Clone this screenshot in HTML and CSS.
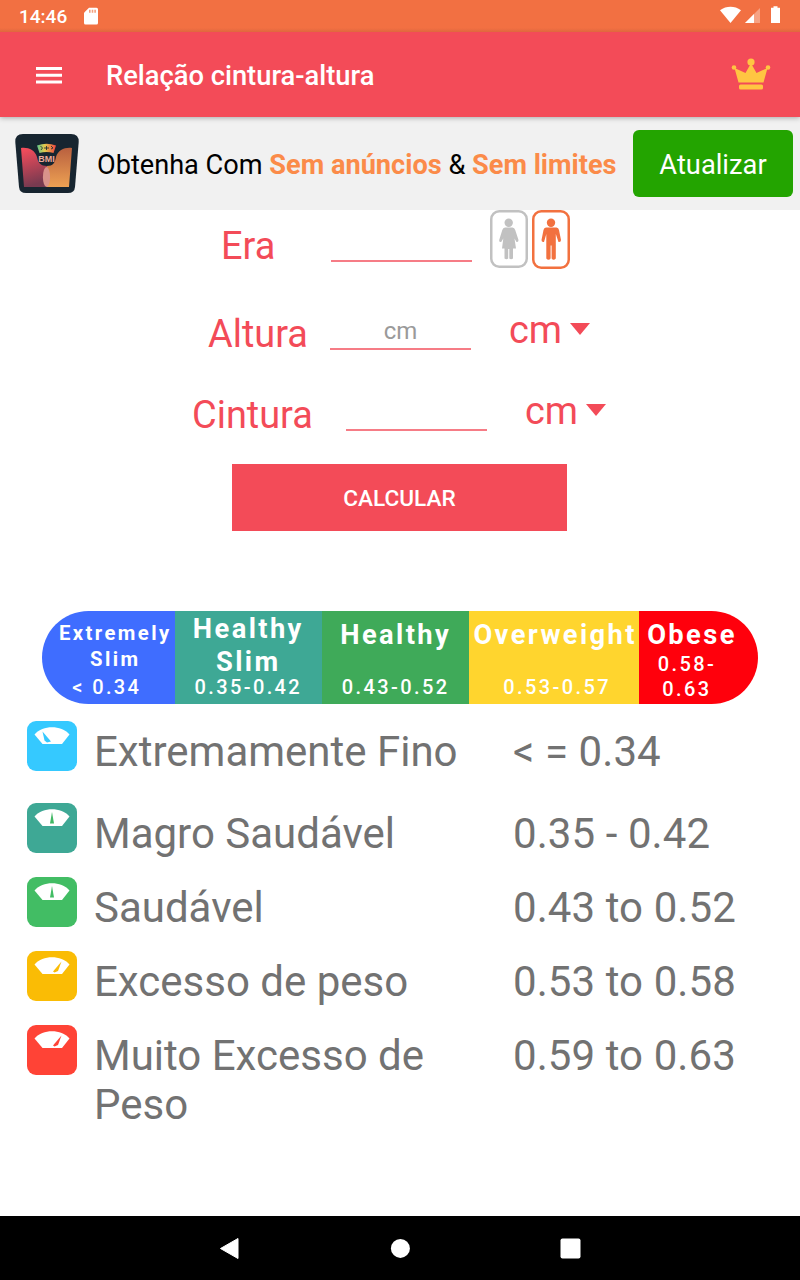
FILE: index.html
```html
<!DOCTYPE html>
<html lang="pt">
<head>
  <meta charset="UTF-8" />
  <meta name="viewport" content="width=device-width, initial-scale=1.0" />
  <title>Relação cintura-altura</title>
  <link rel="stylesheet" href="styles.css">
</head>
<body>

  <svg class="symbols" aria-hidden="true">
    <symbol id="scale-face" viewBox="0 0 50 50">
      <path d="M7.500 13.500C16 3.800 34 3.800 42.500 13.500L35 23H15.500Z" fill="#fff"/>
    </symbol>
  </svg>

  <div class="status-bar">
    <span class="time">14:46</span>
    <svg class="sd-card" width="16" height="18" viewBox="0 0 16 18">
      <path d="M6 .8H13.500Q15 .8 15 2.300V16Q15 17.500 13.500 17.500H2.500Q1 17.500 1 16V5.800Z" fill="#fff"/>
      <path d="M6 2.800h1.600v3H6zM8.700 2.800h1.600v3H8.700zM11.300 2.800h1.600v3h-1.600z" fill="#f4a07f"/>
    </svg>
    <svg class="signals" width="62" height="18" viewBox="0 0 62 18">
      <path d="M1 3.200C7.500 -1.300 15.500 -1.300 22 3.200L11.500 16Z" fill="#fff"/>
      <path d="M26 16L41 1V16Z" fill="#fff" opacity=".35"/>
      <path d="M26 16L35 7V16Z" fill="#fff"/>
      <path d="M52 .700h2.500V-.700h4v1.400H61V16h-9z" fill="#fff"/>
    </svg>
  </div>

  <header class="toolbar">
    <svg class="menu" width="26" height="17" viewBox="0 0 26 17">
      <path d="M0 0h26v3H0zM0 6.800h26v3H0zM0 13.500h26v3H0z" fill="#fff"/>
    </svg>
    <h1>Relação cintura-altura</h1>
    <svg class="crown" width="40" height="32" viewBox="0 0 40 32">
      <path d="M3.500 10L14.500 15L19 7H21L25.500 15L36.500 10L32.500 24.500H7.500Z" fill="#ffc542"/>
      <circle cx="20" cy="4" r="3.600" fill="#ffc542"/>
      <circle cx="3" cy="9.500" r="2.300" fill="#ffc542"/>
      <circle cx="37" cy="9.500" r="2.300" fill="#ffc542"/>
      <rect x="8" y="26.500" width="24" height="5" rx="1.500" fill="#ffc542"/>
    </svg>
  </header>

  <div class="banner">
    <svg class="logo" width="64" height="60" viewBox="0 0 64 60">
      <defs>
        <linearGradient id="logo-left" x1="0" y1="0" x2=".2" y2="1">
          <stop offset="0" stop-color="#fb4d5c"/>
          <stop offset="1" stop-color="#783a50"/>
        </linearGradient>
        <linearGradient id="logo-right" x1="0" y1="0" x2="0" y2="1">
          <stop offset="0" stop-color="#b9603f"/>
          <stop offset="1" stop-color="#eda153"/>
        </linearGradient>
        <linearGradient id="logo-dial">
          <stop offset="0" stop-color="#5cc58c"/>
          <stop offset=".4" stop-color="#e3c94c"/>
          <stop offset="1" stop-color="#ee4340"/>
        </linearGradient>
      </defs>
      <path d="M8 0H56Q64 0 63.700 8L60 53Q59.500 59 53 59H11Q4.500 59 4 53L.3 8Q0 0 8 0Z" fill="#172530"/>
      <path d="M6 14C13 13 20 16 22 23C23 29 26 32 32 32V53H9Z" fill="url(#logo-left)"/>
      <path d="M57 14C50 13 43 16 41 23C40 29 38 32 32 32V53H54Z" fill="url(#logo-right)"/>
      <ellipse cx="31.500" cy="43" rx="3.600" ry="10" fill="#d9938b"/>
      <path d="M22 11.500Q31.500 8 41 11.500L38.500 19Q31.500 17 24.500 19Z" fill="url(#logo-dial)"/>
      <path d="M25.500 12L27.500 14L26 16M29 14H34M31.500 12V16M36 12L38 14L36 15" fill="none" stroke="#172530" stroke-width=".8"/>
      <text x="31.500" y="28" text-anchor="middle">BMI</text>
    </svg>
    <p class="offer">Obtenha Com <b>Sem anúncios</b> &amp; <b>Sem limites</b></p>
    <button class="upgrade">Atualizar</button>
  </div>

  <main>
    <form class="form">
      <div class="field field-age">
        <label>Era</label>
        <span class="entry"></span>
        <div class="gender">
          <svg class="woman" width="38" height="58" viewBox="0 0 38 58">
            <rect x="1.250" y="1.250" width="35.500" height="55.500" rx="8" fill="none" stroke="#c1c1c1" stroke-width="2.500"/>
            <circle cx="18.700" cy="12.800" r="4.200" fill="#c1c1c1"/>
            <path d="M15 17.500H22.500Q24.500 17.500 25.200 20L28.500 30Q28.500 32.500 26.500 32L24.500 28.500L26 38.500H23V48.500Q21 50 19.300 48.500V39H18.200V48.500Q16.500 50 14.500 48.500V38.500H12L13.300 28.500L11.200 32Q9 32.500 9.200 30L12.300 20Q13 17.500 15 17.500Z" fill="#c1c1c1"/>
          </svg>
          <svg class="man" width="38" height="59" viewBox="0 0 38 59">
            <rect x="1.250" y="1.250" width="35.500" height="56.500" rx="8" fill="none" stroke="#f2713f" stroke-width="2.500"/>
            <circle cx="19" cy="12.800" r="4.200" fill="#f2713f"/>
            <path d="M14 17.500H24.500Q26.500 17.500 27 20L29 30Q29 32.500 26.500 32L23.800 24V48.500Q21.500 51 19.600 48.500V35.500H18.600V48.500Q16.500 51 14.300 48.500V24L12 32Q9.500 32.500 9.500 30L11.500 20Q12 17.500 14 17.500Z" fill="#f2713f"/>
          </svg>
        </div>
      </div>

      <div class="field field-height">
        <label>Altura</label>
        <span class="entry">cm</span>
        <div class="unit">cm <i class="caret"></i></div>
      </div>

      <div class="field field-waist">
        <label>Cintura</label>
        <span class="entry"></span>
        <div class="unit">cm <i class="caret"></i></div>
      </div>

      <button type="button" class="calculate">CALCULAR</button>
    </form>

    <div class="gauge">
      <div class="zone zone-extreme"><strong>Extremely<br>Slim</strong><span>&lt; 0.34</span></div>
      <div class="zone zone-slim"><strong>Healthy<br>Slim</strong><span>0.35-0.42</span></div>
      <div class="zone zone-healthy"><strong>Healthy</strong><span>0.43-0.52</span></div>
      <div class="zone zone-over"><strong>Overweight</strong><span>0.53-0.57</span></div>
      <div class="zone zone-obese"><strong>Obese</strong><span>0.58-<br>0.63</span></div>
    </div>

    <ul class="legend">
      <li>
        <svg class="scale blue" viewBox="0 0 50 50"><use href="#scale-face"/><path d="M15.500 10.500L24 20.500L20 21.500L17.500 19.500Z"/></svg>
        <span class="name">Extremamente Fino</span>
        <span class="range">&lt; = 0.34</span>
      </li>
      <li>
        <svg class="scale teal" viewBox="0 0 50 50"><use href="#scale-face"/><path d="M25 9L27 20.500H23Z"/></svg>
        <span class="name">Magro Saudável</span>
        <span class="range">0.35 - 0.42</span>
      </li>
      <li>
        <svg class="scale green" viewBox="0 0 50 50"><use href="#scale-face"/><path d="M25 9L27 20.500H23Z"/></svg>
        <span class="name">Saudável</span>
        <span class="range">0.43 to 0.52</span>
      </li>
      <li>
        <svg class="scale yellow" viewBox="0 0 50 50"><use href="#scale-face"/><path d="M34.500 10.500L31 20L27.500 21.500L26 20.500Z"/></svg>
        <span class="name">Excesso de peso</span>
        <span class="range">0.53 to 0.58</span>
      </li>
      <li>
        <svg class="scale red" viewBox="0 0 50 50"><use href="#scale-face"/><path d="M34.500 10.500L31 20L27.500 21.500L26 20.500Z"/></svg>
        <span class="name">Muito Excesso de Peso</span>
        <span class="range">0.59 to 0.63</span>
      </li>
    </ul>
  </main>

  <nav class="nav-bar">
    <svg width="22" height="24" viewBox="0 0 22 24"><path d="M2.500 12.500L20 2.500V22.500Z" fill="#fff" stroke="#fff" stroke-linejoin="round"/></svg>
    <svg width="20" height="20" viewBox="0 0 20 20"><circle cx="10.400" cy="10.400" r="9.500" fill="#fff"/></svg>
    <svg width="21" height="21" viewBox="0 0 21 21"><rect x=".5" y=".5" width="20" height="20" rx="2" fill="#fff"/></svg>
  </nav>

</body>
</html>
```

FILE: styles.css
```css
* {
  box-sizing: border-box;
}

body {
  display: flex;
  flex-direction: column;
  width: 800px;
  height: 1280px;
  margin: 0;
  font-family: Roboto, sans-serif;
  background-color: #fff;
  overflow: hidden;
}

svg {
  display: block;
  flex: none;
}

.symbols {
  position: absolute;
  width: 0;
  height: 0;
}

button {
  padding: 0;
  border: none;
  font-family: inherit;
  color: #fff;
}

.status-bar {
  display: flex;
  align-items: flex-start;
  height: 32px;
  padding: 7px 19px 0;
  background: linear-gradient(#f27042 28px, #df673e 32px);
  color: #fff;
}

.time {
  width: 64px;
  font-size: 19px;
  font-weight: 500;
  line-height: 20px;
}

.signals {
  margin-left: auto;
  overflow: visible;
}

.toolbar {
  display: flex;
  align-items: center;
  height: 85px;
  padding: 2px 29px 0 36px;
  background-color: #f34b58;
  box-shadow: 0 1px 5px rgba(0, 0, 0, 0.3);
  clip-path: inset(0 0 -8px 0);
  z-index: 1;
}

.toolbar h1 {
  margin: 1px 0 0 44px;
  font-size: 27.300px;
  font-weight: 500;
  line-height: 32px;
  color: #fff;
}

.crown {
  margin: 0 0 4px auto;
}

.banner {
  display: flex;
  align-items: center;
  height: 93px;
  padding: 0 7px 0 15px;
  background-color: #f1f1f1;
}

.logo text {
  font-family: "Liberation Sans", sans-serif;
  font-size: 9px;
  font-weight: bold;
  fill: #eda899;
}

.offer {
  margin: 2px 0 0 18px;
  font-size: 27.150px;
  line-height: 32px;
  color: #000;
  white-space: nowrap;
}

.offer b {
  color: #fb8b49;
}

.upgrade {
  width: 160px;
  height: 67px;
  margin-left: auto;
  padding-top: 2px;
  border-radius: 6px;
  background-color: #23a400;
  font-size: 27.300px;
}

main {
  flex: 1;
}

.form {
  display: flex;
  flex-direction: column;
  align-items: flex-start;
}

.field {
  display: flex;
  align-items: flex-start;
  height: 88px;
  font-size: 37.900px;
  line-height: 44px;
  color: #f34b58;
}

.field-age {
  padding-left: 221px;
}

.field-height {
  height: 81px;
  padding-left: 208px;
}

.field-waist {
  height: 85px;
  padding-left: 192px;
}

.field label {
  width: 122px;
  padding-top: 14px;
}

.field-age label {
  width: 110px;
}

.field-waist label {
  width: 154px;
}

.entry {
  width: 141px;
  height: 52px;
  padding-top: 12px;
  border-bottom: 2px solid #f67c86;
  font-size: 24px;
  line-height: 43px;
  color: #9a9a9a;
  text-align: center;
}

.gender {
  display: flex;
  gap: 4px;
  margin-left: 18px;
}

.unit {
  display: flex;
  align-items: center;
  gap: 8px;
  margin-left: 38px;
  padding-top: 10px;
}

.caret {
  border: 10.500px solid transparent;
  border-top: 12.500px solid #f34b58;
  border-bottom: 0;
  margin-bottom: 2px;
}

.calculate {
  width: 335px;
  height: 67px;
  margin-left: 232px;
  padding-top: 2px;
  background-color: #f34b58;
  font-size: 22.600px;
  font-weight: 500;
}

.gauge {
  display: flex;
  height: 93px;
  margin: 80px 42px 0;
  border-radius: 46.500px;
  overflow: hidden;
  color: #fff;
  text-align: center;
}

.zone {
  display: flex;
  flex-direction: column;
  justify-content: space-between;
  padding: 8px 0 4px;
  font-size: 20px;
  font-weight: 500;
  line-height: 25px;
  letter-spacing: 2.400px;
  white-space: nowrap;
}

.zone strong {
  font-size: 27.300px;
  line-height: 33px;
}

.zone-extreme {
  width: 132.600px;
  padding-left: 14px;
  background-color: #3f6dff;
}

.zone-extreme strong {
  padding-top: 2px;
  font-size: 20.300px;
  line-height: 25.500px;
}

.zone-extreme span {
  margin-right: 17px;
}

.zone-slim {
  width: 147.400px;
  padding-top: 2px;
  background-color: #3ea895;
}

.zone-slim strong {
  height: 62px;
}

.zone-healthy {
  width: 147.400px;
  background-color: #3faa59;
}

.zone-over {
  width: 169.600px;
  background-color: #ffd52e;
}

.zone-over strong {
  padding-left: 2px;
}

.zone-over span {
  padding-left: 6px;
}

.zone-obese {
  width: 119px;
  padding-right: 13px;
  background-color: #ff000c;
}

.zone-obese span {
  margin-right: 10px;
}

.legend {
  margin: 17px 0 0;
  padding: 0 0 0 27px;
  list-style: none;
  font-size: 42px;
  line-height: 49px;
  color: #727272;
}

.legend li {
  display: flex;
  align-items: flex-start;
  height: 74px;
}

.legend li:first-child {
  height: 82px;
}

.scale {
  width: 50px;
  height: 50px;
  border-radius: 9px;
}

.name {
  width: 380px;
  margin: 6px 39px 0 17px;
}

.range {
  margin-top: 6px;
  letter-spacing: 0.080px;
}

.blue { background-color: #35c9ff; fill: #35c9ff; }
.teal { background-color: #3ea895; fill: #41b865; }
.green { background-color: #42bd64; fill: #42bd64; }
.yellow { background-color: #fabc05; fill: #fabc05; }
.red { background-color: #ff4336; fill: #ff4336; }

.nav-bar {
  display: flex;
  align-items: center;
  justify-content: space-between;
  height: 64px;
  padding: 0 219px 0 218px;
  background-color: #000;
}
```
